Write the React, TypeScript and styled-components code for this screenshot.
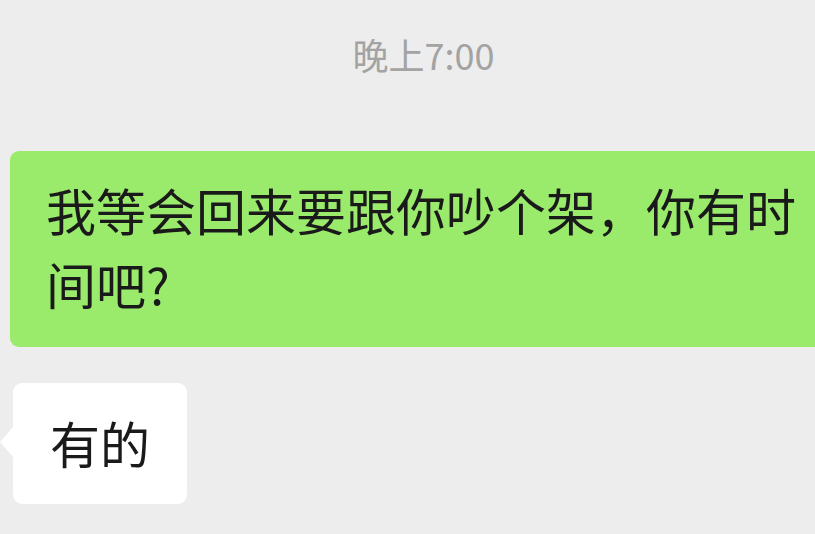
import React from "react";
import styled, { createGlobalStyle } from "styled-components";

const Global = createGlobalStyle`
  html, body {
    margin: 0;
    padding: 0;
    background: #ededed;
    overflow: hidden;
  }
  body {
    font-family: "Noto Sans CJK SC", "Noto Sans", sans-serif;
  }
`;

const Chat = styled.div`
  width: 815px;
  height: 534px;
  display: flex;
  flex-direction: column;
  align-items: flex-start;
  background: #ededed;
  overflow: hidden;
`;

const Time = styled.div`
  align-self: stretch;
  margin-top: 32px;
  padding-left: 32px;
  text-align: center;
  font-size: 36px;
  line-height: 44px;
  color: #a3a3a3;
`;

const Bubble = styled.div<{ $mine?: boolean }>`
  position: relative;
  flex-shrink: 0;
  box-sizing: border-box;
  border-radius: 9px;
  font-size: 50px;
  line-height: 74px;
  color: #1a1a1a;
  background: ${(p) => (p.$mine ? "#9aeb6c" : "#ffffff")};
  margin-left: ${(p) => (p.$mine ? "10px" : "13px")};
  margin-top: ${(p) => (p.$mine ? "75px" : "36px")};
  padding: ${(p) => (p.$mine ? "21px 40px 27px 36px" : "22px 37px 25px 37px")};
  width: ${(p) => (p.$mine ? "840px" : "auto")};
`;

const Tail = styled.span`
  position: absolute;
  left: -13px;
  top: 44px;
  width: 0;
  height: 0;
  border-top: 15px solid transparent;
  border-bottom: 15px solid transparent;
  border-right: 13px solid #ffffff;
`;

export default function App() {
  return (
    <Chat>
      <Global />
      <Time>晚上7:00</Time>
      <Bubble $mine>我等会回来要跟你吵个架，你有时间吧?</Bubble>
      <Bubble>
        <Tail />
        有的
      </Bubble>
    </Chat>
  );
}
